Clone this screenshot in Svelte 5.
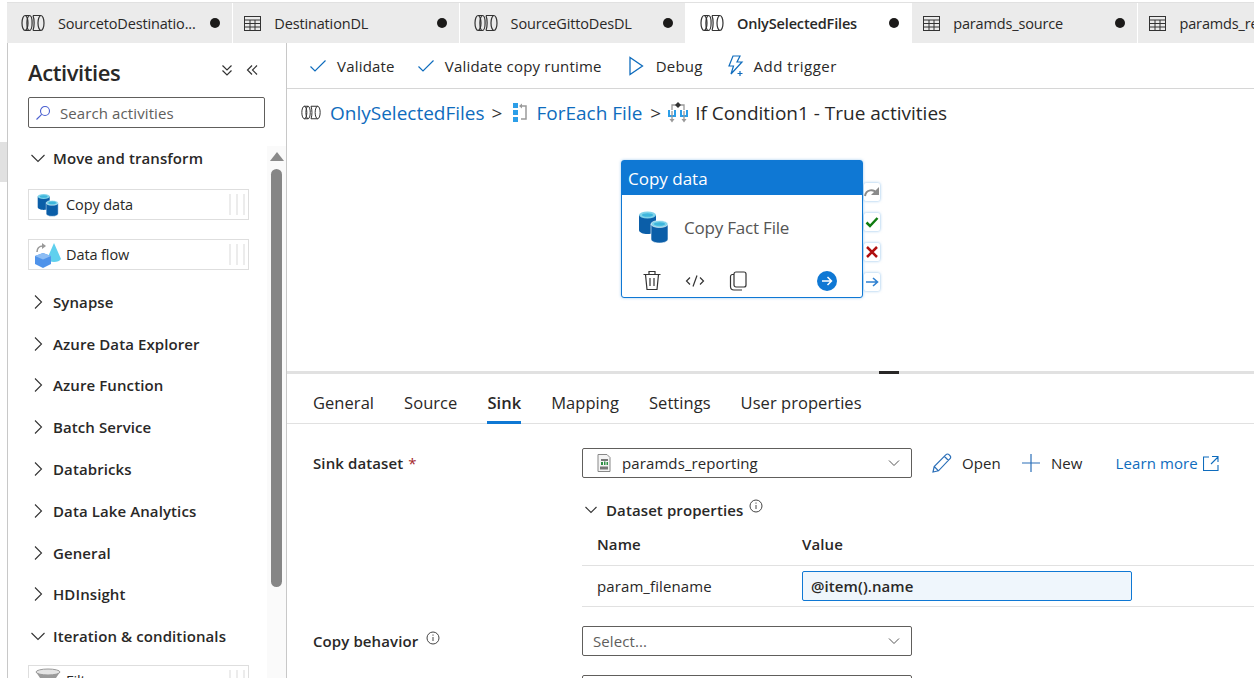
<script>
  const tabs = [
    { name: 'SourcetoDestinatio...', icon: 'pipe' },
    { name: 'DestinationDL', icon: 'table' },
    { name: 'SourceGittoDesDL', icon: 'pipe' },
    { name: 'OnlySelectedFiles', icon: 'pipe', active: true },
    { name: 'paramds_source', icon: 'table' },
    { name: 'paramds_reporting', icon: 'table' }
  ];
  const groupsA = ['Synapse', 'Azure Data Explorer', 'Azure Function', 'Batch Service', 'Databricks', 'Data Lake Analytics', 'General', 'HDInsight'];
  const detailTabs = ['General', 'Source', 'Sink', 'Mapping', 'Settings', 'User properties'];
</script>

{#snippet pipeIcon(w, h)}
  <svg width={w} height={h} viewBox="0 0 24 18" fill="none" stroke="#333" stroke-width="1.2">
    <ellipse cx="4" cy="9" rx="3" ry="7.500" />
    <ellipse cx="8.500" cy="9" rx="2.600" ry="7.500" />
    <path d="M4 1.500h4.500M4 16.500h4.500" />
    <path d="M12 1.500c1.500 4 1.500 11 0 15M12 1.500h8M12 16.500h8" />
    <ellipse cx="20" cy="9" rx="3" ry="7.500" />
  </svg>
{/snippet}

{#snippet tableIcon()}
  <svg width="17" height="15" viewBox="0 0 17 15" fill="none" stroke="#333" stroke-width="1">
    <rect x="0.500" y="0.500" width="16" height="14" />
    <path d="M0.500 4h16M0.500 7.500h16M0.500 11h16M6 4v10.500M11 4v10.500" />
  </svg>
{/snippet}

{#snippet chevron(open)}
  <svg class="chev" width="16" height="16" viewBox="0 0 16 16" fill="none" stroke="#333" stroke-width="1.1">
    {#if open}
      <path d="M1.500 5 8 11.500 14.500 5" />
    {:else}
      <path d="M5 1.500 11.500 8 5 14.500" />
    {/if}
  </svg>
{/snippet}

{#snippet cylinders(s)}
  <svg width={s} height={s} viewBox="0 0 34 34">
    <path d="M1 5v15c0 2.500 4 4 8.500 4s8.500-1.500 8.500-4V5z" fill="#0b5ea8" />
    <ellipse cx="9.500" cy="5" rx="8.500" ry="3.500" fill="#7fd3ea" />
    <ellipse cx="9.500" cy="5" rx="5.500" ry="1.800" fill="#3fb6dc" />
    <path d="M13 14v15c0 2.500 4 4 8.500 4s8.500-1.500 8.500-4V14z" fill="#0b5ea8" stroke="#fff" stroke-width="0.600" />
    <ellipse cx="21.500" cy="14" rx="8.500" ry="3.500" fill="#7fd3ea" stroke="#fff" stroke-width="0.600" />
    <ellipse cx="21.500" cy="14" rx="5.500" ry="1.800" fill="#3fb6dc" />
  </svg>
{/snippet}

{#snippet grip()}
  <span class="grip"><i></i><i></i><i></i></span>
{/snippet}

{#snippet info()}
  <svg class="info" width="14" height="14" viewBox="0 0 14 14" fill="none" stroke="#444">
    <circle cx="7" cy="7" r="6" />
    <path d="M7 6v4M7 3.500v1.200" />
  </svg>
{/snippet}

<div class="page">
  <div class="rail"><div class="rail-mark"></div></div>

  <div class="main">
    <div class="tabs">
      {#each tabs as tab}
        <div class="tab" class:active={tab.active}>
          {#if tab.icon === 'pipe'}
            <span class="tab-icon pipe">{@render pipeIcon(24, 18)}</span>
          {:else}
            <span class="tab-icon">{@render tableIcon()}</span>
          {/if}
          <span class="tab-name">{tab.name}</span>
          <span class="dot"></span>
        </div>
      {/each}
    </div>

    <div class="body">
      <aside class="side">
        <div class="side-head">
          <h2>Activities</h2>
          <svg width="14" height="14" viewBox="0 0 14 14" fill="none" stroke="#333" stroke-width="1.200">
            <path d="M2.500 2.500 7 7l4.500-4.500M2.500 7.500 7 12l4.500-4.500" />
          </svg>
          <svg width="14" height="14" viewBox="0 0 14 14" fill="none" stroke="#333" stroke-width="1.200">
            <path d="M7 2.500 2.500 7 7 11.500M12 2.500 7.500 7 12 11.500" />
          </svg>
        </div>

        <div class="search">
          <svg width="16" height="16" viewBox="0 0 16 16" fill="none" stroke="#4a5fd0" stroke-width="1.100">
            <circle cx="10" cy="6" r="4.500" />
            <path d="M6.700 9.300 1.500 14.500" />
          </svg>
          <span>Search activities</span>
        </div>

        <div class="list">
          <div class="scrollbar">
            <div class="arrow"></div>
            <div class="thumb"></div>
          </div>

          <div class="group first">{@render chevron(true)}<span>Move and transform</span></div>

          <div class="item one">
            <span class="item-icon">{@render cylinders(24)}</span>
            <span>Copy data</span>
            {@render grip()}
          </div>
          <div class="item second">
            <span class="item-icon">
              <svg width="26" height="26" viewBox="0 0 26 26">
                <path d="M19 1 12 17c1 2 4 3 7 3s6-1 7-3z" fill="#5fd0ee" />
                <path d="M8 11l8 3v8l-8 4-8-4v-8z" fill="#4f93ea" />
                <path d="M8 11l8 3-8 3.500L0 14z" fill="#8dbdf4" />
                <path d="M2 10c0-3 2-6 6-6" fill="none" stroke="#999" stroke-width="1.600" />
                <path d="M7 1 11 4 7 7z" fill="#999" />
              </svg>
            </span>
            <span>Data flow</span>
            {@render grip()}
          </div>

          {#each groupsA as g}
            <div class="group">{@render chevron(false)}<span>{g}</span></div>
          {/each}
          <div class="group">{@render chevron(true)}<span>Iteration &amp; conditionals</span></div>

          <div class="item third">
            <span class="item-icon">
              <svg width="26" height="26" viewBox="0 0 26 26">
                <path d="M1 4h24l-8 12v8h-8v-8z" fill="#9a9a9a" />
                <ellipse cx="13" cy="4" rx="12" ry="3" fill="#e4e4e4" stroke="#9a9a9a" />
              </svg>
            </span>
            <span>Filter</span>
            {@render grip()}
          </div>
        </div>
      </aside>

      <section class="content">
        <div class="toolbar">
          <div class="tool">
            <svg width="18" height="14" viewBox="0 0 18 14" fill="none" stroke="#0f6cbd" stroke-width="1.200"><path d="M1.500 7.500 6 12 16.500 1.500" /></svg>
            <span>Validate</span>
          </div>
          <div class="tool">
            <svg width="18" height="14" viewBox="0 0 18 14" fill="none" stroke="#0f6cbd" stroke-width="1.200"><path d="M1.500 7.500 6 12 16.500 1.500" /></svg>
            <span>Validate copy runtime</span>
          </div>
          <div class="tool debug">
            <svg width="16" height="20" viewBox="0 0 16 20" fill="none" stroke="#0f6cbd" stroke-width="1.300"><path d="M2 1.500v17L14.500 10z" /></svg>
            <span>Debug</span>
          </div>
          <div class="tool trigger">
            <svg width="20" height="22" viewBox="0 0 20 22" fill="none" stroke="#0f6cbd" stroke-width="1.200">
              <path d="M8 1h7l-3 6h5L6 19l2.500-8H4z" />
              <path d="M15 16v5M12.500 18.500h5" />
            </svg>
            <span>Add trigger</span>
          </div>
        </div>

        <div class="crumbs">
          {@render pipeIcon(20, 15)}
          <a class="crumb-link first-link" href="#top">OnlySelectedFiles</a>
          <span class="gt">&gt;</span>
          <svg class="each-icon" width="14" height="19" viewBox="0 0 14 19" fill="none">
            <path d="M0 0h5v5H0zM0 7h5v5H0zM0 14h5v5H0z" fill="#2c9ee8" />
            <path d="M8 3h5v13H8" stroke="#9a9a9a" stroke-width="1.500" />
            <path d="M9 .5 6 3l3 2.500z" fill="#9a9a9a" />
          </svg>
          <a class="crumb-link each-link" href="#top">ForEach File</a>
          <span class="gt second-gt">&gt;</span>
          <svg width="20" height="21" viewBox="0 0 20 21" fill="none">
            <path d="M4 8V3h12v5" stroke="#999" stroke-width="1.300" />
            <path d="M10 0l3 3-3 3-3-3z" fill="#333" />
            <path d="M1 8v6h6V8M13 8v6h6V8" stroke="#2c9ee8" stroke-width="2" />
            <path d="M4 9v9M16 9v9" stroke="#999" stroke-width="1.300" />
            <path d="M1.500 17 4 20.500 6.500 17zM13.500 17l2.500 3.500 2.500-3.500z" fill="#999" />
          </svg>
          <span class="crumb-last">If Condition1 - True activities</span>
        </div>

        <div class="canvas">
          <div class="node">
            <div class="node-title">Copy data</div>
            <div class="node-body">
              {@render cylinders(34)}
              <span>Copy Fact File</span>
            </div>
            <div class="node-actions">
              <svg width="20" height="21" viewBox="0 0 20 21" fill="none" stroke="#333" stroke-width="1.200">
                <path d="M1.500 4.500h17M7 4V1.500h6V4M3.500 4.500l1.500 15h10l1.500-15M8 8v8M12 8v8" />
              </svg>
              <svg class="code" width="20" height="14" viewBox="0 0 20 14" fill="none" stroke="#333" stroke-width="1.200">
                <path d="M5 3.500 1.500 7 5 10.500M15 3.500 18.500 7 15 10.500M12 1.500 8 12.500" />
              </svg>
              <svg class="copy" width="18" height="20" viewBox="0 0 18 20" fill="none" stroke="#333" stroke-width="1.200">
                <rect x="5" y="1" width="12" height="15" rx="2" />
                <path d="M5 3.500H3a2 2 0 0 0-1.500 2v10c0 2 1.500 3.500 3.500 3.500h8" />
              </svg>
              <svg class="go" width="20" height="20" viewBox="0 0 20 20">
                <circle cx="10" cy="10" r="10" fill="#0f78d4" />
                <path d="M5 10h9M10.500 6 14.500 10l-4 4" fill="none" stroke="#fff" stroke-width="1.500" />
              </svg>
            </div>
            <div class="ports">
              <div class="port">
                <svg width="16" height="12" viewBox="0 0 16 12" fill="none" stroke="#8a8a8a" stroke-width="2"><path d="M1 10c1-7 9-7 11-3" /><path d="M15 1v8H7z" fill="#8a8a8a" stroke="none" /></svg>
              </div>
              <div class="port">
                <svg width="14" height="12" viewBox="0 0 14 12" fill="none" stroke="#107c10" stroke-width="2.500"><path d="M1.500 6.500 5 10l7.500-8" /></svg>
              </div>
              <div class="port">
                <svg width="12" height="12" viewBox="0 0 12 12" fill="none" stroke="#b00f0f" stroke-width="2.500"><path d="M1 1l10 10M11 1 1 11" /></svg>
              </div>
              <div class="port">
                <svg width="14" height="12" viewBox="0 0 14 12" fill="none" stroke="#2f80d0" stroke-width="1.600"><path d="M1 6h11M8 2l4.500 4L8 10" /></svg>
              </div>
            </div>
          </div>
        </div>

        <div class="splitter"><div class="handle"></div></div>

        <div class="dtabs">
          {#each detailTabs as t}
            <div class="dtab" class:on={t === 'Sink'}>{t}</div>
          {/each}
        </div>

        <div class="form">
          <div class="row sink-row">
            <label class="lbl" for="sink">Sink dataset <em>*</em></label>
            <div class="select" id="sink">
              <svg width="14" height="18" viewBox="0 0 14 18">
                <path d="M1 .500h9l3 3v14H1z" fill="#f4f4f4" stroke="#888" />
                <path d="M4 5h7v2H4z" fill="#777" />
                <path d="M4 8h2v3H4zM7 7.500h1.500V11H7zM9.500 8H11v3H9.500z" fill="#2f8f46" />
                <path d="M3 12.500h8v3H3z" fill="#777" />
              </svg>
              <span class="val">paramds_reporting</span>
              <svg class="caret" width="14" height="14" viewBox="0 0 14 14" fill="none" stroke="#555"><path d="M2 4.500 7 9.500l5-5" /></svg>
            </div>
            <div class="act open">
              <svg width="20" height="20" viewBox="0 0 20 20" fill="none" stroke="#2b6fb8" stroke-width="1.200">
                <path d="M1 19l1.200-5.500L14 1.700a2 2 0 0 1 3 0l1 1a2 2 0 0 1 0 3L6.500 17.800zM2.200 13.500l4.300 4.300M12.500 3.500l4 4" />
              </svg>
              <span>Open</span>
            </div>
            <div class="act new">
              <svg width="20" height="20" viewBox="0 0 20 20" fill="none" stroke="#2b6fb8" stroke-width="1.200"><path d="M10 1v18M1 10h18" /></svg>
              <span>New</span>
            </div>
            <a class="learn" href="#top">Learn more
              <svg width="16" height="15" viewBox="0 0 16 15" fill="none" stroke="#0f6cbd" stroke-width="1.100"><path d="M6 1H.5v13.500H15V9M9 .5h6V6M15 1 8 8" /></svg>
            </a>
          </div>

          <div class="props">
            <div class="props-head">
              <svg width="14" height="14" viewBox="0 0 14 14" fill="none" stroke="#333" stroke-width="1.100"><path d="M1.500 4 7 9.500 12.500 4" /></svg>
              <span>Dataset properties</span>
              {@render info()}
            </div>
            <div class="thead"><span>Name</span><span>Value</span></div>
            <div class="trow">
              <span>param_filename</span>
              <div class="value-input">@item().name</div>
            </div>
          </div>

          <div class="row behavior">
            <div class="lbl">Copy behavior <span class="lbl-info">{@render info()}</span></div>
            <div class="select">
              <span class="placeholder">Select...</span>
              <svg class="caret" width="14" height="14" viewBox="0 0 14 14" fill="none" stroke="#555"><path d="M2 4.500 7 9.500l5-5" /></svg>
            </div>
          </div>
          <div class="row">
            <div class="lbl"></div>
            <div class="select"></div>
          </div>
        </div>
      </section>
    </div>
  </div>
</div>

<style>
  :global(body) {
    margin: 0;
    background: #fff;
    overflow: hidden;
  }

  .page {
    display: flex;
    width: 1254px;
    height: 678px;
    overflow: hidden;
    font-family: "Open Sans", "Noto Sans", sans-serif;
    font-size: 15px;
    color: #292827;
    letter-spacing: 0.1px;
  }

  .rail {
    width: 7px;
    flex: none;
    padding-top: 142px;
    box-sizing: border-box;
  }
  .rail-mark {
    height: 40px;
    background: #e1e1e1;
  }

  .main {
    flex: 1;
    min-width: 0;
    display: flex;
    flex-direction: column;
  }

  /* top tabs */
  .tabs {
    display: flex;
    height: 41px;
    margin-top: 2px;
    border-top: 1px solid #e1e1e1;
    box-sizing: border-box;
    background: #ebebeb;
    flex: none;
    overflow: hidden;
  }
  .tab {
    width: 226.300px;
    flex: none;
    box-sizing: border-box;
    display: flex;
    align-items: center;
    padding: 0 12px 0 11px;
    border-right: 1px solid #fff;
    white-space: nowrap;
  }
  .tab.active {
    background: #fff;
    font-weight: 600;
  }
  .tab-icon {
    width: 30px;
    flex: none;
    display: flex;
  }
  .tab-icon.pipe {
    width: 37px;
    padding-left: 3px;
  }
  .tab-name {
    flex: 1;
    font-size: 14.500px;
    letter-spacing: -0.15px;
  }
  .dot {
    width: 10px;
    height: 10px;
    border-radius: 50%;
    background: #1b1a19;
    flex: none;
  }

  .body {
    flex: 1;
    display: flex;
    min-height: 0;
  }

  /* activities panel */
  .side {
    width: 280px;
    flex: none;
    box-sizing: border-box;
    border-left: 1px solid #c8c8c8;
    border-right: 1px solid #c8c8c8;
    display: flex;
    flex-direction: column;
    overflow: hidden;
  }
  .side-head {
    display: flex;
    flex: none;
    align-items: center;
    height: 54px;
    padding: 0 27px 0 20px;
    gap: 11px;
  }
  .side-head h2 {
    margin: 3px auto 0 0;
    font-size: 22px;
    font-weight: 600;
    letter-spacing: -0.4px;
  }
  .search {
    margin-left: 20px;
    width: 237px;
    height: 31px;
    flex: none;
    box-sizing: border-box;
    border: 1px solid #605e5c;
    border-radius: 2px;
    display: flex;
    align-items: center;
    gap: 9px;
    padding-left: 6px;
    color: #605e5c;
  }
  .list {
    position: relative;
    flex: 1;
    padding-left: 20px;
  }
  .scrollbar {
    position: absolute;
    right: 0;
    top: 18px;
    bottom: 0;
    width: 19px;
    background: #fafafa;
    display: flex;
    flex-direction: column;
    align-items: center;
  }
  .arrow {
    width: 0;
    height: 0;
    border-left: 7px solid transparent;
    border-right: 7px solid transparent;
    border-bottom: 9px solid #8a8a8a;
    margin: 6px 0 8px;
  }
  .thumb {
    width: 11px;
    height: 418px;
    border-radius: 6px;
    background: #868686;
  }
  .group {
    height: 41.800px;
    display: flex;
    align-items: center;
    font-weight: 600;
    gap: 7px;
    padding-left: 2px;
    white-space: nowrap;
  }
  .group.first {
    margin-top: 9px;
    height: 42px;
  }
  .chev {
    flex: none;
  }
  .item {
    width: 221px;
    height: 31px;
    box-sizing: border-box;
    border: 1px solid #dedede;
    display: flex;
    align-items: center;
    font-size: 14.500px;
    letter-spacing: -0.1px;
    padding-right: 3px;
  }
  .item.one {
    margin: 10px 0 19px;
  }
  .item.second {
    margin-bottom: 11px;
  }
  .item.third {
    margin-top: 8px;
  }
  .item-icon {
    width: 37px;
    flex: none;
    display: flex;
    justify-content: center;
    box-sizing: border-box;
  }
  .item.one .item-icon {
    padding-left: 2px;
  }
  .grip {
    margin-left: auto;
    display: flex;
    gap: 5px;
  }
  .grip i {
    width: 2px;
    height: 21px;
    background: #ececec;
  }

  /* right part */
  .content {
    flex: 1;
    min-width: 0;
    display: flex;
    flex-direction: column;
  }
  .toolbar {
    height: 46px;
    flex: none;
    box-sizing: border-box;
    border-bottom: 1px solid #d6d6d6;
    display: flex;
    align-items: center;
    padding-left: 22px;
    gap: 22px;
    letter-spacing: 0.2px;
  }
  .tool {
    display: flex;
    align-items: center;
    gap: 10px;
    white-space: nowrap;
  }
  .tool.debug {
    margin-left: 4px;
    gap: 12px;
  }
  .tool.trigger {
    gap: 9px;
  }
  .tool.trigger span {
    letter-spacing: 0.5px;
  }
  .crumbs {
    height: 49px;
    flex: none;
    box-sizing: border-box;
    padding: 0 0 2px 14px;
    display: flex;
    align-items: center;
    font-size: 19px;
    gap: 7px;
    white-space: nowrap;
    letter-spacing: 0;
  }
  .crumb-link {
    color: #0f6cbd;
    text-decoration: none;
  }
  .first-link {
    margin-left: 2px;
  }
  .each-icon {
    margin-left: 4px;
  }
  .each-link {
    margin-left: 2px;
  }
  .second-gt {
    margin-left: 1px;
  }
  .gt {
    color: #333;
  }

  .canvas {
    position: relative;
    height: 233px;
    flex: none;
  }
  .node {
    position: absolute;
    left: 334px;
    top: 22px;
    width: 242px;
    height: 138px;
    box-sizing: border-box;
    border: 1px solid #0f78d4;
    border-radius: 3px;
    background: #fff;
    box-shadow: 0 0 3px rgba(15, 120, 212, 0.4);
  }
  .node-title {
    height: 34px;
    background: #0f78d4;
    color: #fff;
    display: flex;
    align-items: center;
    padding-left: 6px;
    font-size: 17px;
    letter-spacing: 0;
  }
  .node-body {
    display: flex;
    align-items: center;
    gap: 12px;
    padding: 15px 0 0 16px;
    font-size: 17px;
    letter-spacing: -0.2px;
    color: #555;
  }
  .node-actions {
    position: absolute;
    left: 20px;
    right: 25px;
    bottom: 6px;
    display: flex;
    align-items: center;
  }
  .code {
    margin-left: 23px;
  }
  .copy {
    margin-left: 24px;
  }
  .go {
    margin-left: auto;
  }
  .ports {
    position: absolute;
    left: 242px;
    top: 22px;
    display: flex;
    flex-direction: column;
    gap: 12px;
  }
  .port {
    width: 16px;
    height: 18px;
    display: flex;
    align-items: center;
    justify-content: center;
    box-shadow: 0 0 3px rgba(15, 120, 212, 0.5);
    border-radius: 2px;
    background: #fff;
  }

  .splitter {
    height: 3px;
    flex: none;
    background: #e1e1e1;
    position: relative;
  }
  .handle {
    position: absolute;
    left: 592px;
    top: 0;
    width: 20px;
    height: 3px;
    background: #292827;
  }

  .dtabs {
    height: 50px;
    flex: none;
    box-sizing: border-box;
    border-bottom: 1px solid #e1e1e1;
    display: flex;
    padding-left: 26px;
    gap: 30px;
    font-size: 16.500px;
    letter-spacing: 0.05px;
  }
  .dtab {
    display: flex;
    align-items: center;
    height: 50px;
    box-sizing: border-box;
    padding-top: 9px;
    border-bottom: 3px solid transparent;
    margin-bottom: -1px;
  }
  .dtab.on {
    font-weight: 600;
    border-bottom-color: #0f78d4;
  }

  .form {
    padding: 24px 0 0 26px;
  }
  .row {
    display: flex;
    align-items: center;
    height: 30px;
    white-space: nowrap;
  }
  .lbl {
    width: 269px;
    flex: none;
    font-weight: 600;
    display: flex;
    align-items: center;
    gap: 5px;
  }
  .lbl em {
    color: #a4262c;
    font-style: normal;
    font-weight: 400;
  }
  .lbl-info {
    display: flex;
    margin-left: 5px;
  }
  .select {
    width: 330px;
    height: 30px;
    flex: none;
    box-sizing: border-box;
    border: 1px solid #605e5c;
    border-radius: 2px;
    display: flex;
    align-items: center;
    padding: 0 10px 0 14px;
    gap: 11px;
  }
  .caret {
    margin-left: auto;
  }
  .placeholder {
    color: #605e5c;
    margin-left: -4px;
  }
  .act {
    display: flex;
    align-items: center;
    gap: 10px;
  }
  .open {
    margin-left: 20px;
  }
  .new {
    margin-left: 20px;
  }
  .learn {
    margin-left: 33px;
    color: #0f6cbd;
    text-decoration: none;
    display: flex;
    align-items: center;
    gap: 5px;
  }

  .props {
    margin-left: 269px;
    padding-top: 17px;
  }
  .props-head {
    display: flex;
    align-items: center;
    height: 30px;
    font-weight: 600;
    gap: 8px;
    padding-left: 2px;
  }
  .props-head .chev {
    margin-right: 0;
  }
  .info {
    margin-bottom: 6px;
    flex: none;
    margin-left: -2px;
  }
  .props-head :global(.info) {
    margin-bottom: 9px;
  }
  .thead {
    display: flex;
    height: 41px;
    align-items: center;
    padding: 0 0 2px 15px;
    box-sizing: border-box;
    font-weight: 600;
    border-bottom: 1px solid #e1e1e1;
  }
  .thead span:first-child,
  .trow > span {
    width: 205px;
    flex: none;
  }
  .trow {
    display: flex;
    align-items: center;
    height: 41px;
    box-sizing: border-box;
    padding-left: 15px;
    border-bottom: 1px solid #e1e1e1;
  }
  .value-input {
    width: 330px;
    height: 30px;
    box-sizing: border-box;
    border: 1px solid #0f78d4;
    border-radius: 2px;
    background: #eff6fc;
    display: flex;
    align-items: center;
    padding-left: 8px;
    font-weight: 600;
  }
  .behavior {
    margin: 19px 0;
  }
</style>
